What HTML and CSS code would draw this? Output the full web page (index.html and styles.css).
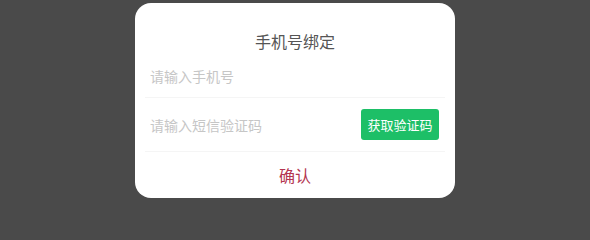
FILE: index.html
```html
<!DOCTYPE html>
<html lang="zh-CN">
<head>
<meta charset="utf-8">
<title>手机号绑定</title>
<link rel="stylesheet" href="styles.css">
</head>
<body>
<div class="stage">
  <div class="dialog">
    <div class="title">手机号绑定</div>
    <div class="row">
      <input class="field" type="text" placeholder="请输入手机号">
    </div>
    <div class="row row-code">
      <input class="field" type="text" placeholder="请输入短信验证码">
      <button class="code-btn" type="button">获取验证码</button>
    </div>
    <div class="confirm">确认</div>
  </div>
</div>
</body>
</html>
```
FILE: styles.css
```css
html, body {
  margin: 0;
  padding: 0;
  background: #4a4a4a;
  font-family: "Noto Sans CJK SC", "Noto Sans", sans-serif;
}
.stage {
  width: 590px;
  height: 202px;
  display: flex;
  justify-content: center;
  padding-top: 3px;
  box-sizing: border-box;
}
.dialog {
  width: 320px;
  height: 195px;
  background: #ffffff;
  border-radius: 16px;
  box-sizing: border-box;
  padding: 26px 10px 0;
  display: flex;
  flex-direction: column;
}
.title {
  height: 25px;
  line-height: 25px;
  text-align: center;
  font-size: 16px;
  color: #555555;
}
.row {
  height: 44px;
  display: flex;
  align-items: center;
  border-bottom: 1px solid #f5f5f5;
  box-sizing: border-box;
  padding: 0 6px 0 5px;
}
.row-code {
  height: 54px;
}
.field {
  flex: 1;
  min-width: 0;
  border: none;
  outline: none;
  padding: 0;
  font-family: inherit;
  font-size: 14px;
  color: #333;
  background: transparent;
}
.field::placeholder {
  color: #c6c6c6;
}
.code-btn {
  width: 78px;
  height: 31px;
  border: none;
  border-radius: 3px;
  background: #1dbf67;
  color: #ffffff;
  font-family: inherit;
  font-size: 13px;
  padding: 0;
  margin-top: -1px;
}
.confirm {
  flex: 1;
  display: flex;
  align-items: center;
  justify-content: center;
  font-size: 16px;
  color: #b33550;
  padding-bottom: 1px;
}
```
